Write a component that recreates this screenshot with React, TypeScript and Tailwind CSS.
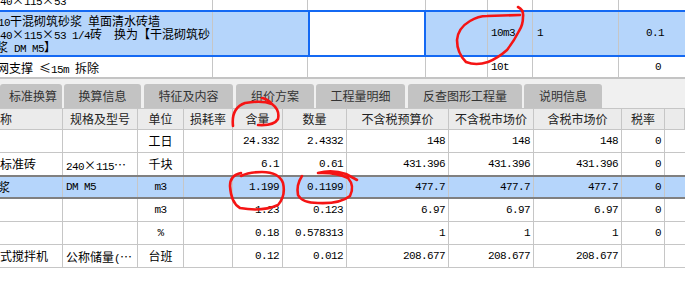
import React from 'react'

const cjk = "font-['Noto_Sans_CJK_SC','Noto_Sans',sans-serif]"
const mono = "font-['Liberation_Mono','Noto_Sans_CJK_SC',monospace] text-[11px] tracking-[-0.6px]"

const topGrid = 'grid grid-cols-[213px_95px_118px_62px_45px_86px_66px]'
const tableGrid = 'grid grid-cols-[63px_75px_46px_49px_50px_64px_102px_85px_88px_43px_20px]'

// mixed text laid out on a 6px / 12px cell, like the old bitmap song font
const Mixed = ({ text }: { text: string }) => {
  const runs: { kind: string; s: string }[] = []
  for (const ch of text) {
    let kind = 'c'
    if (ch === ' ') kind = 's'
    else if (ch === '×' || ch === '≤') kind = 'x'
    else if (ch.charCodeAt(0) < 0x7f) kind = 'a'
    const last = runs[runs.length - 1]
    if (last && last.kind === kind && kind !== 'x' && kind !== 's') last.s += ch
    else runs.push({ kind, s: ch })
  }
  return (
    <>
      {runs.map((r, i) => {
        if (r.kind === 's') return <span key={i} className="w-[6px] shrink-0" />
        if (r.kind === 'x')
          return (
            <span key={i} className={`w-[12px] shrink-0 text-center ${cjk} text-[12px]`}>
              {r.s}
            </span>
          )
        if (r.kind === 'a')
          return (
            <span key={i} className={`shrink-0 ${mono}`}>
              {r.s}
            </span>
          )
        return (
          <span key={i} className={`shrink-0 ${cjk} text-[12px]`}>
            {r.s}
          </span>
        )
      })}
    </>
  )
}

// one line of mixed text, fixed height, baseline aligned
const TextLine = ({ text, className = '' }: { text: string; className?: string }) => (
  <div className={`flex items-baseline h-[13px] leading-[13px] whitespace-nowrap ${className}`}>
    <Mixed text={text} />
  </div>
)

interface Row {
  name: string
  spec: string
  unit: string
  nums: string[]
  selected?: boolean
}

const rows: Row[] = [
  { name: '', spec: '', unit: '工日', nums: ['24.332', '2.4332', '148', '148', '148', '0'] },
  { name: '标准砖', spec: '240×115…', unit: '千块', nums: ['6.1', '0.61', '431.396', '431.396', '431.396', '0'] },
  { name: '浆', spec: 'DM M5', unit: 'm3', nums: ['1.199', '0.1199', '477.7', '477.7', '477.7', '0'], selected: true },
  { name: '', spec: '', unit: 'm3', nums: ['1.23', '0.123', '6.97', '6.97', '6.97', '0'] },
  { name: '', spec: '', unit: '%', nums: ['0.18', '0.578313', '1', '1', '1', '0'] },
  { name: '式搅拌机', spec: '公称储量(…', unit: '台班', nums: ['0.12', '0.012', '208.677', '208.677', '208.677', ''] },
]

const tabs = [
  { label: '标准换算', w: 'w-[62px] justify-end pr-[5px]' },
  { label: '换算信息', w: 'w-[77px] justify-center' },
  { label: '特征及内容', w: 'w-[89px] justify-center' },
  { label: '组价方案', w: 'w-[78px] justify-center' },
  { label: '工程量明细', w: 'w-[89px] justify-center' },
  { label: '反查图形工程量', w: 'w-[114px] justify-center' },
  { label: '说明信息', w: 'w-[78px] justify-center' },
]

const headers = ['称', '规格及型号', '单位', '损耗率', '含量', '数量', '不含税预算价', '不含税市场价', '含税市场价', '税率', '']

const line = 'border-r border-[#c6c6c6]'

export default function App() {
  return (
    <div className="relative w-[685px] h-[283px] overflow-hidden bg-white text-black">
      {/* upper grid */}
      <div className="flex flex-col">
        <div className={`${topGrid} h-[10px] overflow-hidden`}>
          <div className={`${line} overflow-hidden`}>
            <TextLine text="40×115×53" className="-mt-[7px]" />
          </div>
          <div className={line} />
          <div className={line} />
          <div className={line} />
          <div className={line} />
          <div className={line} />
          <div />
        </div>

        <div className={`${topGrid} h-[47px] bg-[#b5d5fb] border-y-2 border-[#1469f3]`}>
          <div className={`${line} overflow-hidden pt-[2px]`}>
            <TextLine text="10干混砌筑砂浆 单面清水砖墙" className="-ml-[2px]" />
            <TextLine text="40×115×53 1/4砖  换为【干混砌筑砂" />
            <TextLine text="浆 DM M5】" className="-ml-[4px]" />
          </div>
          <div />
          <div className="bg-white border-x-2 border-[#1469f3]" />
          <div className={line} />
          <div className={`${line} flex items-center pl-[3px] ${mono}`}>10m3</div>
          <div className={`${line} flex items-center pl-[4px] ${mono}`}>1</div>
          <div className={`flex items-center justify-end pr-[21px] ${mono}`}>0.1</div>
        </div>

        <div className={`${topGrid} h-[20px]`}>
          <div className={`${line} overflow-hidden flex items-center`}>
            <TextLine text="网支撑 ≤15m 拆除" className="-ml-[3px]" />
          </div>
          <div className={line} />
          <div className={line} />
          <div className={line} />
          <div className={`${line} flex items-center pl-[3px] ${mono}`}>10t</div>
          <div className={line} />
          <div className={`flex items-center justify-end pr-[24px] ${mono}`}>0</div>
        </div>
      </div>

      <div className="h-[2px] bg-[#c4c4c4]" />

      {/* tabs */}
      <div className="h-[29px] bg-[#f0f0f0] flex items-end gap-[2px]">
        {tabs.map((t, i) => (
          <div
            key={t.label}
            className={`${t.w} h-[24px] flex items-center bg-[#c3c3c3] rounded-t-[3px] ${cjk} text-[12px] text-[#333] ${i === 2 || i === 3 || i === 5 ? 'ml-px' : ''}`}
          >
            {t.label}
          </div>
        ))}
      </div>

      {/* lower table header */}
      <div className={`${tableGrid} h-[22px] bg-[#ebebeb] border-y border-[#c6c6c6]`}>
        {headers.map((h, i) => (
          <div
            key={i}
            className={`${line} flex items-center ${i === 0 ? 'justify-start' : 'justify-center'} ${cjk} text-[12px] text-[#222] whitespace-nowrap overflow-hidden`}
          >
            {h}
          </div>
        ))}
      </div>

      {/* lower table body */}
      {rows.map((r, ri) => (
        <div
          key={ri}
          className={`${tableGrid} ${r.selected ? 'h-[24px] -mt-px bg-[#b5d5fb] border-y-2 border-[#808080]' : 'h-[23px] border-b border-[#c6c6c6]'}`}
        >
          <div className={`${line} flex items-center overflow-hidden whitespace-nowrap ${cjk} text-[12px]`}>
            <span className={r.name === '浆' ? '-ml-[2px]' : ''}>{r.name}</span>
          </div>
          <div className={`${line} flex items-center pl-[3px] overflow-hidden`}>
            {r.spec && <TextLine text={r.spec} />}
          </div>
          <div className={`${line} flex items-center justify-center ${r.unit === 'm3' || r.unit === '%' ? mono : `${cjk} text-[12px]`}`}>{r.unit}</div>
          <div className={line} />
          {r.nums.map((n, ni) => (
            <div key={ni} className={`${line} flex items-center justify-end pr-[3px] ${mono}`}>
              {n}
            </div>
          ))}
          <div />
        </div>
      ))}

      {/* red hand-drawn marks */}
      <svg
        className="absolute inset-0 pointer-events-none"
        width="685"
        height="283"
        viewBox="0 0 685 283"
        fill="none"
        stroke="#f51414"
        strokeWidth="2.6"
        strokeLinecap="round"
        strokeLinejoin="round"
      >
        <path d="M518 7 Q524 10 523 17 Q523 25 519 31 Q514 41 507 50 Q498 58 488 62 Q476 66 466 62 Q457 53 457 40 Q458 28 470 21 Q478 16 487 16 L520 15" />
        <path d="M233 126 Q231 108 245 103 Q262 100 272 104 Q280 110 278 119 Q274 126 258 125 M272 104 Q268 99 262 98" />
        <path d="M241 173 Q230 175 230 186 Q231 203 240 208 Q262 212 278 205 Q286 196 283 183 Q279 172 262 172 Q249 172 241 176" />
        <path d="M302 176 Q296 185 298 195 Q302 203 318 203 Q340 204 350 196 Q355 186 348 178 Q335 172 318 173 Q332 169 346 174 L357 180" />
      </svg>
    </div>
  )
}
